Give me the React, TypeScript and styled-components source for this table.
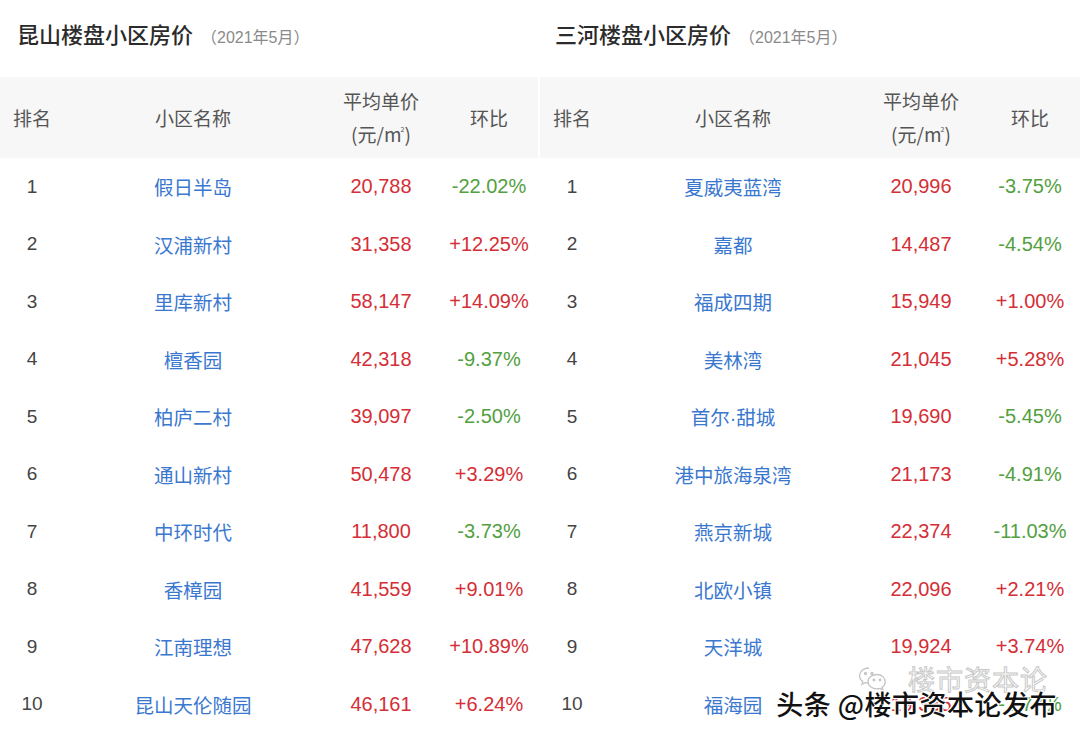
import React from "react";
import styled, { createGlobalStyle } from "styled-components";

type Row = { name: string; price: string; change: string };

const kunshan: Row[] = [
  { name: "假日半岛", price: "20,788", change: "-22.02%" },
  { name: "汉浦新村", price: "31,358", change: "+12.25%" },
  { name: "里库新村", price: "58,147", change: "+14.09%" },
  { name: "檀香园", price: "42,318", change: "-9.37%" },
  { name: "柏庐二村", price: "39,097", change: "-2.50%" },
  { name: "通山新村", price: "50,478", change: "+3.29%" },
  { name: "中环时代", price: "11,800", change: "-3.73%" },
  { name: "香樟园", price: "41,559", change: "+9.01%" },
  { name: "江南理想", price: "47,628", change: "+10.89%" },
  { name: "昆山天伦随园", price: "46,161", change: "+6.24%" },
];

const sanhe: Row[] = [
  { name: "夏威夷蓝湾", price: "20,996", change: "-3.75%" },
  { name: "嘉都", price: "14,487", change: "-4.54%" },
  { name: "福成四期", price: "15,949", change: "+1.00%" },
  { name: "美林湾", price: "21,045", change: "+5.28%" },
  { name: "首尔·甜城", price: "19,690", change: "-5.45%" },
  { name: "港中旅海泉湾", price: "21,173", change: "-4.91%" },
  { name: "燕京新城", price: "22,374", change: "-11.03%" },
  { name: "北欧小镇", price: "22,096", change: "+2.21%" },
  { name: "天洋城", price: "19,924", change: "+3.74%" },
  { name: "福海园", price: "19,335", change: "-2.77%" },
];

const GlobalStyle = createGlobalStyle`
  html, body {
    margin: 0;
    padding: 0;
    background: #fff;
  }
  body {
    font-family: "Liberation Sans", "Noto Sans CJK SC", sans-serif;
  }
`;

const Page = styled.div`
  position: relative;
  width: 1080px;
  height: 737px;
  overflow: hidden;
  display: grid;
  grid-template-columns: 538px 540px;
  column-gap: 2px;
  background: #fff;
`;

const Panel = styled.section`
  display: flex;
  flex-direction: column;
`;

const TitleBar = styled.div<{ $indent: number }>`
  height: 77px;
  box-sizing: border-box;
  padding: 17px 0 0 ${(p) => p.$indent}px;
  display: flex;
  align-items: baseline;
  line-height: 32px;
`;

const Title = styled.h2`
  margin: 0;
  font-size: 22px;
  font-weight: 500;
  color: #2b2b2b;
  font-family: "Noto Sans CJK SC", sans-serif;
`;

const DateNote = styled.span`
  margin-left: 8px;
  font-size: 16px;
  color: #8a8a8a;
  font-family: "Liberation Sans", "Noto Sans CJK SC", sans-serif;
`;

const Grid = styled.div`
  display: grid;
  grid-template-columns: 64px 258px 118px 1fr;
  align-items: center;
  justify-items: center;
`;

const HeadRow = styled(Grid)`
  height: 81px;
  background: #f7f7f7;
  color: #555;
  font-size: 19px;
  font-family: "Noto Sans CJK SC", sans-serif;
`;

const HeadCell = styled.div`
  text-align: center;
  line-height: 28px;
`;

const Sup = styled.sup`
  font-size: 7px;
  vertical-align: 10px;
  margin-left: -1px;
`;

const BodyRow = styled(Grid)`
  height: 57.5px;
  font-size: 20px;
`;

const Rank = styled.div`
  color: #444;
  font-size: 19px;
`;

const Name = styled.div`
  color: #3a78d0;
  font-family: "Liberation Sans", "Noto Sans CJK SC", sans-serif;
  font-size: 19.5px;
`;

const Price = styled.div`
  color: #d42e36;
`;

const Change = styled.div<{ $up: boolean }>`
  color: ${(p) => (p.$up ? "#d42e36" : "#52a040")};
`;

const Watermark = styled.div`
  position: absolute;
  right: 23px;
  bottom: 14px;
  font-family: "Noto Sans CJK SC", sans-serif;
  font-size: 27px;
  font-weight: 500;
  color: #111;
  letter-spacing: 0.5px;
  text-shadow: 0 0 2px #fff, 0 0 2px #fff, 1px 1px 0 #fff, -1px -1px 0 #fff,
    1px -1px 0 #fff, -1px 1px 0 #fff;
  white-space: nowrap;
`;

const GhostMark = styled.div`
  position: absolute;
  left: 858px;
  top: 664px;
  display: flex;
  align-items: center;
  gap: 20px;
  font-family: "Noto Sans CJK SC", sans-serif;
  font-size: 27px;
  color: transparent;
  -webkit-text-stroke: 1px #c8c8c8;
  letter-spacing: 1px;
  line-height: 30px;
`;

const WeChat = () => (
  <svg width="30" height="26" viewBox="0 0 30 26" fill="none" stroke="#c4c4c4" strokeWidth="1.3">
    <path d="M11 2C5.5 2 1.5 5.6 1.5 9.8c0 2.4 1.3 4.4 3.3 5.8l-.9 2.8 3.3-1.7c1.2.4 2.5.6 3.8.6" />
    <path d="M19 8.5c-5 0-9 3.2-9 7.2s4 7.2 9 7.2c1.1 0 2.1-.2 3.1-.5l2.8 1.4-.8-2.4c1.9-1.3 3.1-3.3 3.1-5.5 0-4.2-3.6-7.4-8.2-7.4z" />
    <circle cx="7.5" cy="7.5" r="1" />
    <circle cx="14" cy="7.5" r="1" />
    <circle cx="16" cy="14" r="0.8" />
    <circle cx="22" cy="14" r="0.8" />
  </svg>
);

const PriceTable = ({ title, rows, indent }: { title: string; rows: Row[]; indent: number }) => (
  <Panel>
    <TitleBar $indent={indent}>
      <Title>{title}</Title>
      <DateNote>（2021年5月）</DateNote>
    </TitleBar>
    <HeadRow>
      <HeadCell>排名</HeadCell>
      <HeadCell>小区名称</HeadCell>
      <HeadCell>
        平均单价
        <br />
        (元/m<Sup>2</Sup>)
      </HeadCell>
      <HeadCell>环比</HeadCell>
    </HeadRow>
    {rows.map((r, i) => (
      <BodyRow key={r.name}>
        <Rank>{i + 1}</Rank>
        <Name>{r.name}</Name>
        <Price>{r.price}</Price>
        <Change $up={r.change.startsWith("+")}>{r.change}</Change>
      </BodyRow>
    ))}
  </Panel>
);

export default function App() {
  return (
    <>
      <GlobalStyle />
      <Page>
        <PriceTable title="昆山楼盘小区房价" rows={kunshan} indent={17} />
        <PriceTable title="三河楼盘小区房价" rows={sanhe} indent={15} />
        <GhostMark>
          <WeChat />
          <span>楼市资本论</span>
        </GhostMark>
        <Watermark>头条 @楼市资本论发布</Watermark>
      </Page>
    </>
  );
}
